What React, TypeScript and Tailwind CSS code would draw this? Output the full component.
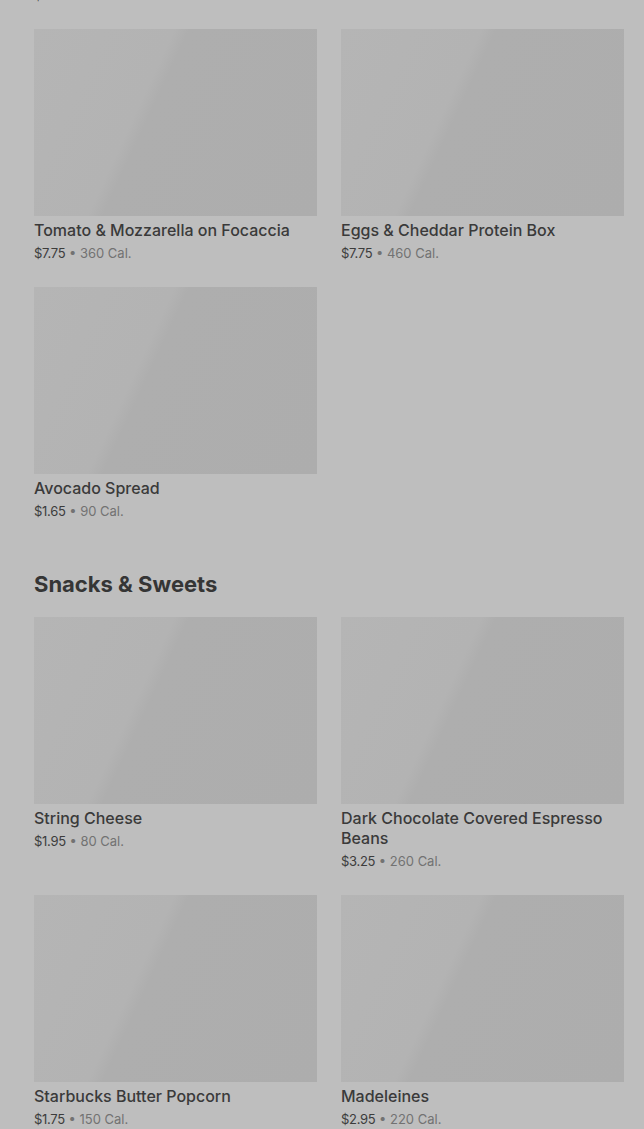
type Item = { name: string; price: string; cal: string };

const topItems: Item[] = [
  { name: "Tomato & Mozzarella on Focaccia", price: "$7.75", cal: "360 Cal." },
  { name: "Eggs & Cheddar Protein Box", price: "$7.75", cal: "460 Cal." },
  { name: "Avocado Spread", price: "$1.65", cal: "90 Cal." },
];

const snacks: Item[] = [
  { name: "String Cheese", price: "$1.95", cal: "80 Cal." },
  { name: "Dark Chocolate Covered Espresso Beans", price: "$3.25", cal: "260 Cal." },
  { name: "Starbucks Butter Popcorn", price: "$1.75", cal: "150 Cal." },
  { name: "Madeleines", price: "$2.95", cal: "220 Cal." },
];

const PriceLine = ({ price, cal }: { price: string; cal: string }) => (
  <p className="text-[13px] leading-5 mt-[3px] text-[#3c3c3c] tracking-[-0.3px]">
    {price}
    <span className="text-[#727272] tracking-normal"> • {cal}</span>
  </p>
);

const ProductCard = ({ item }: { item: Item }) => (
  <div className="flex flex-col">
    {/* skeleton image */}
    <div className="h-[187px] w-full bg-[linear-gradient(115deg,#b5b5b5_0%,#b3b3b3_38%,#aeaeae_42%,#adadad_100%)]" />
    <h3 className="mt-[4px] text-[16px] leading-5 font-medium text-[#3a3a3a]">{item.name}</h3>
    <PriceLine price={item.price} cal={item.cal} />
  </div>
);

export default function App() {
  return (
    <div className="min-h-screen h-[1129px] overflow-hidden bg-[#bebebe] pl-[34px] pr-[20px] font-['Inter','Noto_Sans',sans-serif]">
      {/* tail of the previous card */}
      <div className="-mt-[18px]">
        <PriceLine price="$" cal="" />
      </div>

      <div className="mt-[24px] grid grid-cols-2 gap-x-6 gap-y-6">
        {topItems.map((it) => (
          <ProductCard key={it.name} item={it} />
        ))}
      </div>

      <h2 className="mt-[49px] text-[22px] leading-7 font-bold text-[#353535]">
        Snacks &amp; Sweets
      </h2>

      <div className="mt-[19px] grid grid-cols-2 gap-x-6 gap-y-6">
        {snacks.map((it) => (
          <ProductCard key={it.name} item={it} />
        ))}
      </div>
    </div>
  );
}
